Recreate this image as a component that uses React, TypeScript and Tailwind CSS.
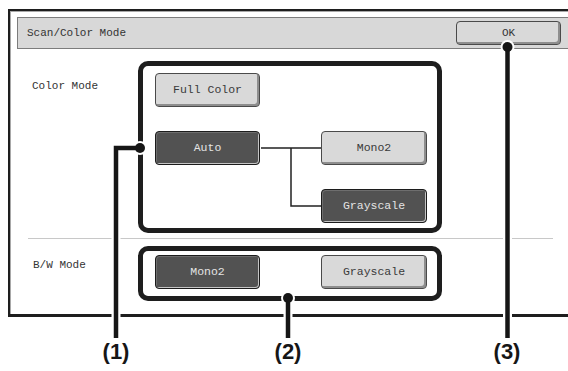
import React from "react";

const mono = { fontFamily: '"Liberation Mono", "Courier New", monospace' };

interface IBtn {
  label: string;
  dark?: boolean;
  className?: string;
}

const ModeButton = ({ label, dark, className = "" }: IBtn) => (
  <div
    className={
      dark
        ? `h-[34px] flex items-center justify-center rounded-[4px] border border-[#1c1c1c] bg-[#525252] text-[#e4e4e4] text-[11.5px] shadow-[inset_-1px_-1px_0_#c4c4c4,inset_1px_1px_0_#6e6e6e] ${className}`
        : `h-[34px] flex items-center justify-center rounded-[4px] border border-[#4a4a4a] bg-[#d9d9d9] text-[#3a3a3a] text-[11.5px] shadow-[inset_-2px_-2px_0_#8e8e8e] ${className}`
    }
  >
    {label}
  </div>
);

// leader lines for the numbered callouts
const Callouts = () => (
  <svg className="absolute inset-0 pointer-events-none" width={568} height={371}>
    <g fill="none" stroke="#fff" strokeWidth={9}>
      <path d="M140 148 H116 V338" />
      <path d="M288 298 V338" />
      <path d="M507.5 47 V338" />
    </g>
    <g fill="#fff">
      <circle cx={140} cy={148} r={7} />
      <circle cx={288} cy={298} r={7} />
      <circle cx={507.5} cy={47} r={7} />
    </g>
    <g fill="none" stroke="#161616" strokeWidth={4.5}>
      <path d="M140 148 H116 V338" />
      <path d="M288 298 V338" />
      <path d="M507.5 47 V338" />
    </g>
    <g fill="#161616">
      <circle cx={140} cy={148} r={5} />
      <circle cx={288} cy={298} r={5} />
      <circle cx={507.5} cy={47} r={5} />
    </g>
  </svg>
);

const App = () => {
  return (
    <div className="relative w-[568px] h-[371px] overflow-hidden bg-white">
      <div
        className="ml-[8px] mt-[9px] w-[580px] h-[308px] border-l-2 border-t-2 border-b-[3px] border-[#1e1e1e]"
        style={mono}
      >
        <div className="h-full border-l border-t border-[#a8a8a8] pl-[6px] pt-[5px]">
          {/* title bar */}
          <div className="w-[560px] h-[32px] flex items-center border border-r-0 border-[#7c7c7c] bg-[#d8d8d8]">
            <div className="pl-[9px] text-[11px] text-[#333]">Scan/Color Mode</div>
            <div className="ml-auto mr-[16px] w-[105px] h-[24px] flex items-center justify-center rounded-[4px] border border-[#4a4a4a] bg-[#d9d9d9] text-[11px] text-[#333] shadow-[inset_-2px_-2px_0_#8e8e8e]">
              OK
            </div>
          </div>

          {/* color mode */}
          <div className="mt-[12px] flex">
            <div className="w-[121px] pl-[15px] pt-[19px] text-[11px] leading-[13px] text-[#333]">Color Mode</div>
            <div className="relative w-[304px] h-[172px] border-[5px] border-[#1e1e1e] rounded-[10px]">
              <div className="grid grid-cols-[105px_106px] gap-x-[61px] gap-y-[24px] pl-[12px] pt-[7px]">
                <ModeButton label="Full Color" className="col-start-1 row-start-1" />
                <ModeButton label="Auto" dark className="col-start-1 row-start-2" />
                <ModeButton label="Mono2" className="col-start-2 row-start-2" />
                <ModeButton label="Grayscale" dark className="col-start-2 row-start-3" />
              </div>
              <svg className="absolute left-0 top-0 pointer-events-none" width={294} height={162}>
                <path d="M118 82 H178 M148 82 V140 H178" fill="none" stroke="#222" strokeWidth={1.5} />
              </svg>
            </div>
          </div>

          <div className="mt-[5px] ml-[11px] w-[525px] h-px bg-[#c8c8c8]" />

          {/* b/w mode */}
          <div className="mt-[7px] flex">
            <div className="w-[121px] pl-[16px] pt-[13px] text-[11px] leading-[13px] text-[#333]">B/W Mode</div>
            <div className="w-[304px] h-[55px] border-[5px] border-[#1e1e1e] rounded-[10px]">
              <div className="grid grid-cols-[105px_106px] gap-x-[61px] pl-[12px] pt-[4px]">
                <ModeButton label="Mono2" dark />
                <ModeButton label="Grayscale" />
              </div>
            </div>
          </div>
        </div>
      </div>

      <Callouts />

      {[
        { n: "(1)", x: "left-[116px]" },
        { n: "(2)", x: "left-[288px]" },
        { n: "(3)", x: "left-[507px]" },
      ].map((c) => (
        <span
          key={c.n}
          className={`absolute top-[339px] ${c.x} -translate-x-1/2 text-[22px] leading-[26px] font-bold text-[#161616]`}
          style={{ fontFamily: '"Liberation Sans", Arial, sans-serif' }}
        >
          {c.n}
        </span>
      ))}
    </div>
  );
};

export default App;
